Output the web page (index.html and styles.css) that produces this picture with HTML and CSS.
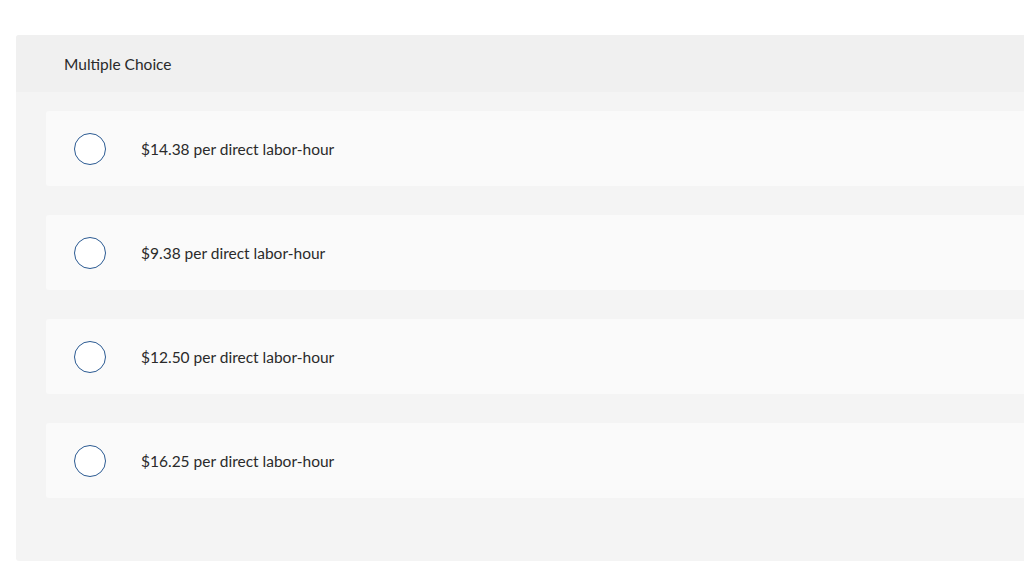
FILE: index.html
```html
<!DOCTYPE html>
<html>
<head>
<meta charset="utf-8">
<link rel="stylesheet" href="styles.css">
</head>
<body>
<section class="question">
  <header class="question-header">Multiple Choice</header>
  <div class="choices">
    <label class="choice"><span class="radio"></span><span class="choice-text">$14.38 per direct labor-hour</span></label>
    <label class="choice"><span class="radio"></span><span class="choice-text">$9.38 per direct labor-hour</span></label>
    <label class="choice"><span class="radio"></span><span class="choice-text">$12.50 per direct labor-hour</span></label>
    <label class="choice"><span class="radio"></span><span class="choice-text">$16.25 per direct labor-hour</span></label>
  </div>
</section>
</body>
</html>
```
FILE: styles.css
```css
html, body {
  margin: 0;
  padding: 0;
  background: #ffffff;
}
body {
  font-family: Lato, "Open Sans", sans-serif;
  color: #2a2a2a;
}
.question {
  margin: 35px 0 0 16px;
  background: #f4f4f4;
  border-radius: 3px 0 0 3px;
  overflow: hidden;
}
.question-header {
  height: 57px;
  background: #f0f0f0;
  box-sizing: border-box;
  padding: 2px 0 0 48px;
  display: flex;
  align-items: center;
  font-size: 15.5px;
  line-height: 1;
}
.choices {
  display: flex;
  flex-direction: column;
  gap: 29px;
  padding: 19px 0 63px 30px;
}
.choice {
  height: 75px;
  background: #fafafa;
  border-radius: 3px 0 0 3px;
  display: flex;
  align-items: center;
  padding-left: 28px;
  box-sizing: border-box;
}
.radio {
  width: 32px;
  height: 32px;
  box-sizing: border-box;
  border: 1.5px solid #2b5a92;
  border-radius: 50%;
  background: #ffffff;
  flex: none;
}
.choice-text {
  margin-left: 35px;
  padding-top: 2px;
  font-size: 15.5px;
  line-height: 1;
}
```
